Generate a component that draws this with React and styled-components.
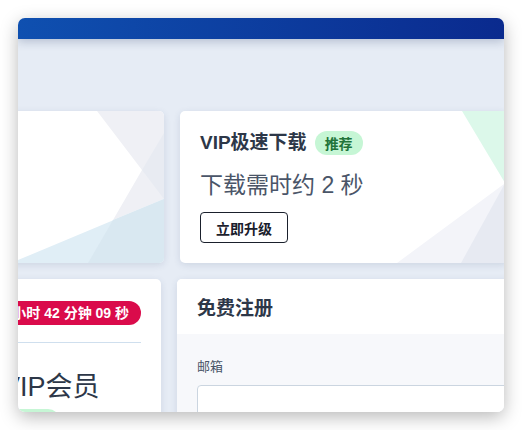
import React from 'react';
import styled, { createGlobalStyle } from 'styled-components';

const GlobalStyle = createGlobalStyle`
  html, body {
    margin: 0;
    background: #fff;
  }
  body {
    font-family: "Liberation Sans", "Noto Sans CJK SC", sans-serif;
    color: #2d3748;
  }
`;

const Window = styled.div`
  margin: 18px;
  width: 486px;
  height: 394px;
  border-radius: 7px;
  overflow: hidden;
  background: #e6ecf5;
  box-shadow: 0 5px 18px rgba(0, 0, 0, 0.28);
  display: flex;
  flex-direction: column;
`;

const TitleBar = styled.div`
  flex-shrink: 0;
  height: 21px;
  position: relative;
  z-index: 2;
  background: linear-gradient(90deg, #0f50b0, #0a2a8e);
  box-shadow: 0 3px 10px rgba(20, 40, 90, 0.22);
`;

const Page = styled.div`
  padding-top: 72px;
  display: flex;
  flex-direction: column;
  gap: 16px;
`;

const Row = styled.div`
  display: grid;
  grid-template-columns: ${props => props.columns};
  gap: 16px;
  margin-left: ${props => props.shift}px;
`;

const Card = styled.div`
  position: relative;
  height: ${props => props.height ? `${props.height}px` : 'auto'};
  background: #fff;
  border-radius: 5px;
  overflow: hidden;
  box-shadow: 0 2px 7px rgba(40, 60, 110, 0.13);
`;

const Decor = styled.svg`
  position: absolute;
  top: 0;
  left: 0;
`;

const CardBody = styled.div`
  position: relative;
  z-index: 1;
  padding: ${props => props.pad || '20px'};
`;

const TitleLine = styled.div`
  display: flex;
  align-items: center;
  gap: 8px;
  height: 24px;
`;

const Title = styled.span`
  font-size: 19px;
  font-weight: 700;
  color: #2d3748;
  line-height: 24px;
`;

const Badge = styled.span`
  display: inline-flex;
  align-items: center;
  height: ${props => props.h || 24}px;
  padding: 0 10px;
  border-radius: 12px;
  background: #c6f6d5;
  color: #22743a;
  font-size: 14px;
  font-weight: 700;
`;

const Hint = styled.div`
  margin-top: 14px;
  font-size: 23px;
  line-height: 32px;
  color: #4a5568;
`;

const OutlineButton = styled.button`
  margin-top: 11px;
  height: 31px;
  padding: 0 15px;
  background: #fff;
  border: 1px solid #1a202c;
  border-radius: 4px;
  font-family: inherit;
  font-size: 14px;
  font-weight: 700;
  color: #1a202c;
`;

const Countdown = styled.div`
  display: flex;
  justify-content: flex-end;
  padding-bottom: 17px;
  border-bottom: 1px solid #cfdfee;
`;

const Pill = styled.span`
  height: 24px;
  padding: 0 12px;
  border-radius: 12px;
  background: #da0b4b;
  color: #fff;
  font-size: 14px;
  font-weight: 700;
  line-height: 24px;
  white-space: nowrap;
`;

const PlanName = styled.div`
  margin-top: 27px;
  font-size: 27px;
  line-height: 34px;
  color: #2d3748;
`;

const PlanTag = styled(Badge)`
  margin-top: 5px;
  width: 58px;
  padding: 0;
`;

const FormHead = styled.div`
  height: 55px;
  display: flex;
  align-items: center;
  padding: 0 20px;
  background: #fff;
  font-size: 19px;
  font-weight: 600;
  color: #2d3748;
`;

const FormBody = styled.div`
  background: #f7f8fb;
  padding: 24px 20px 20px;
`;

const Label = styled.div`
  font-size: 13px;
  line-height: 18px;
  color: #4a5568;
`;

const Input = styled.div`
  margin-top: 9px;
  height: 40px;
  background: #fff;
  border: 1px solid #cbd5e0;
  border-radius: 4px;
`;

const App = () => (
  <>
    <GlobalStyle />
    <Window>
      <TitleBar />
      <Page>
        <Row columns="300px 328px" shift={-154}>
          <Card height={152}>
            <Decor width="300" height="152" viewBox="0 0 300 152">
              <polygon points="233,0 300,0 300,88 249,109 278,59" fill="#eff0f5" />
              <polygon points="300,22 300,88 278,59" fill="#e8ebf2" />
              <polygon points="147,152 300,88 300,152" fill="#e0eef6" />
              <polygon points="249,109 300,88 300,152 224,152" fill="#d9e8f1" />
            </Decor>
          </Card>
          <Card height={152}>
            <Decor width="328" height="152" viewBox="0 0 328 152">
              <polygon points="282,0 328,0 328,77" fill="#dcf8ea" />
              <polygon points="324,73 328,73 328,152 217,152" fill="#f3f4f9" />
              <polygon points="324,74 328,74 328,152 281,152" fill="#e7eaf2" />
            </Decor>
            <CardBody>
              <TitleLine>
                <Title>VIP极速下载</Title>
                <Badge>推荐</Badge>
              </TitleLine>
              <Hint>下载需时约 2 秒</Hint>
              <OutlineButton>立即升级</OutlineButton>
            </CardBody>
          </Card>
        </Row>
        <Row columns="179px 400px" shift={-36}>
          <Card>
            <CardBody pad="22px 20px 20px">
              <Countdown>
                <Pill>01 小时 42 分钟 09 秒</Pill>
              </Countdown>
              <PlanName>VIP会员</PlanName>
              <PlanTag h={24} />
            </CardBody>
          </Card>
          <Card>
            <FormHead>免费注册</FormHead>
            <FormBody>
              <Label>邮箱</Label>
              <Input />
            </FormBody>
          </Card>
        </Row>
      </Page>
    </Window>
  </>
);

export default App;
